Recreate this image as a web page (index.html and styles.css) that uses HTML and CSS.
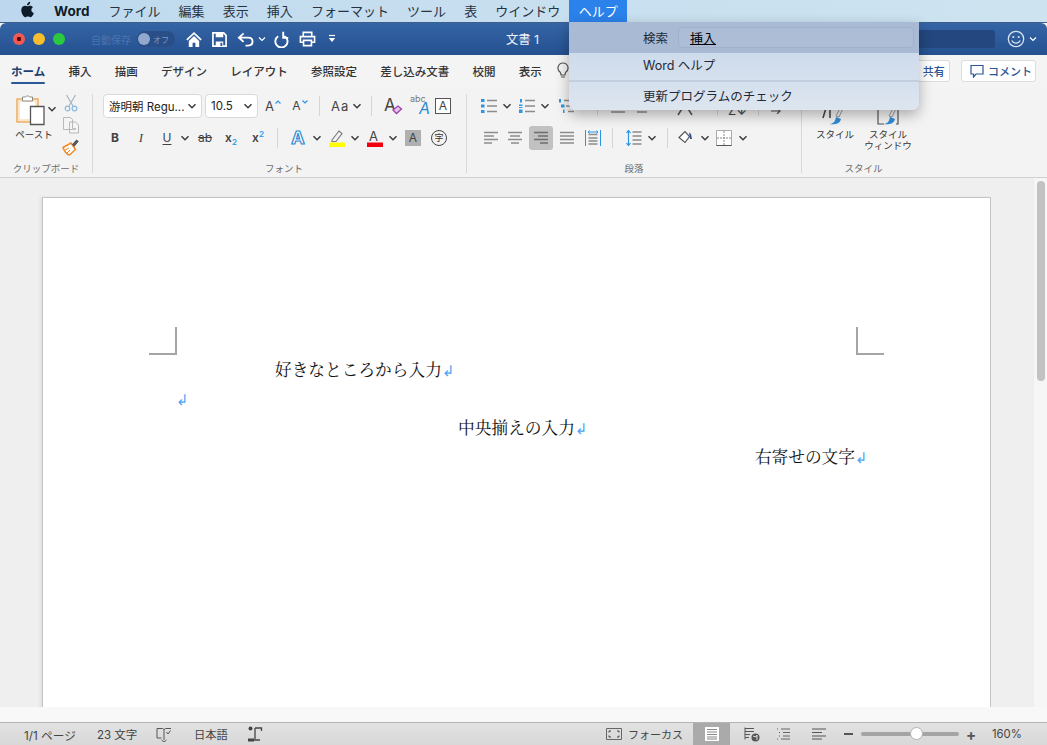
FILE: index.html
```html
<!DOCTYPE html>
<html lang="ja">
<head>
<meta charset="utf-8">
<title>Word</title>
<link rel="stylesheet" href="styles.css">
</head>
<body>
<svg class="defs" width="0" height="0">
  <symbol id="chev" viewBox="0 0 10 10"><path d="M1.500 3.200 5 6.700l3.500-3.500" fill="none" stroke="#3c3c3c" stroke-width="1.500"/></symbol>
  <symbol id="al" viewBox="0 0 16 14"><path d="M1 1.500h14M1 5h10M1 8.500h14M1 12h8" stroke="#8c8c8c" stroke-width="1.500"/></symbol>
  <symbol id="ac" viewBox="0 0 16 14"><path d="M1 1.500h14M3 5h10M1 8.500h14M4 12h8" stroke="#8c8c8c" stroke-width="1.500"/></symbol>
  <symbol id="ar" viewBox="0 0 16 14"><path d="M1 1.500h14M5 5h10M1 8.500h14M7 12h8" stroke="#6e6e6e" stroke-width="1.500"/></symbol>
  <symbol id="aj" viewBox="0 0 16 14"><path d="M1 1.500h14M1 5h14M1 8.500h14M1 12h14" stroke="#8c8c8c" stroke-width="1.500"/></symbol>
</svg>

<nav class="menubar">
  <svg class="apple" viewBox="0 0 14 16"><path d="M10.600 8.400c0-1.700 1.400-2.500 1.500-2.600-.8-1.200-2.100-1.400-2.500-1.400-1.100-.1-2.100.6-2.600.6-.6 0-1.400-.6-2.300-.6C3.500 4.400 2.400 5.100 1.800 6.100.5 8.300 1.500 11.600 2.700 13.400c.6.900 1.300 1.900 2.300 1.800.9 0 1.300-.6 2.400-.6s1.400.6 2.400.6 1.600-.9 2.200-1.800c.7-1 1-2 1-2.100-.1 0-2.400-.9-2.400-2.900zM8.800 3.100c.5-.6.800-1.500.7-2.300-.7 0-1.600.5-2.100 1.100-.5.500-.9 1.400-.8 2.200.8.100 1.700-.4 2.200-1z" fill="#0e1c2a"/></svg>
  <span class="menu-app">Word</span>
  <span>ファイル</span><span>編集</span><span>表示</span><span>挿入</span><span>フォーマット</span><span>ツール</span><span>表</span><span>ウインドウ</span>
  <span class="menu-on">ヘルプ</span>
</nav>

<header class="titlebar">
  <i class="light red"></i><i class="light yellow"></i><i class="light green"></i>
  <span class="autosave">自動保存</span>
  <span class="toggle"><i></i><b>オフ</b></span>
  <svg class="tb home" viewBox="0 0 18 18"><path d="M9 1 .8 8.800l1.300 1.200L9 3.500l6.900 6.500 1.300-1.200z" fill="#fff"/><path d="M3.500 10.500 9 5.300l5.500 5.200V17h-4v-4.500h-3V17h-4z" fill="#fff"/></svg>
  <svg class="tb save" viewBox="0 0 16 16"><path d="M1 1h11.500L15 3.500V15H1z" fill="none" stroke="#fff" stroke-width="1.800"/><path d="M4 1h8v4.500H4zM4 10h8v5H4z" fill="#fff"/><path d="M9 11.500h2V15H9z" fill="#2d5a9b"/></svg>
  <svg class="tb undo" viewBox="0 0 18 16"><path d="M7 1.500 2 6l5 4.500M2.500 6H12c6 0 6 8.500 0 8.500H9" fill="none" stroke="#fff" stroke-width="2"/></svg>
  <svg class="tb-chev" viewBox="0 0 10 10"><path d="M2 3.500 5 6.500l3-3" fill="none" stroke="#fff" stroke-width="1.200"/></svg>
  <svg class="tb redo" viewBox="0 0 16 18"><path d="M4.500 5.500A6.500 6.500 0 1 0 11 5.300" fill="none" stroke="#fff" stroke-width="2"/><path d="M9.800.8v6.400h5.400" fill="none" stroke="#fff" stroke-width="2"/></svg>
  <svg class="tb print" viewBox="0 0 18 16"><path d="M4.500 5V1h9v4M4.500 11.500H1.500V5.500h15v6h-3" fill="none" stroke="#fff" stroke-width="1.700"/><path d="M4.800 9.500h8.400v5.500H4.800z" fill="none" stroke="#fff" stroke-width="1.700"/></svg>
  <svg class="tb-more" viewBox="0 0 8 10"><path d="M1 1.500h6" stroke="#fff" stroke-width="1.200"/><path d="M.8 4h6.400L4 8z" fill="#fff"/></svg>
  <span class="doc-title">文書 1</span>
  <span class="titlesearch"></span>
  <svg class="smile" viewBox="0 0 18 18"><circle cx="9" cy="9" r="7.700" fill="none" stroke="#d6e2f2" stroke-width="1.300"/><circle cx="6.300" cy="7" r="1.100" fill="#d6e2f2"/><circle cx="11.700" cy="7" r="1.100" fill="#d6e2f2"/><path d="M4.800 10.500c1.800 3.500 6.600 3.500 8.400 0" fill="none" stroke="#d6e2f2" stroke-width="1.300"/></svg>
  <svg class="tb-chev" viewBox="0 0 10 10"><path d="M2 3.500 5 6.500l3-3" fill="none" stroke="#fff" stroke-width="1.200"/></svg>
</header>

<div class="tabs">
  <span class="tab-on">ホーム</span><span>挿入</span><span>描画</span><span>デザイン</span><span>レイアウト</span><span>参照設定</span><span>差し込み文書</span><span>校閲</span><span>表示</span>
  <svg class="bulb" viewBox="0 0 12 18"><path d="M6 1a5 5 0 0 0-3 9c.7.6 1 1.500 1 3h4c0-1.500.3-2.400 1-3A5 5 0 0 0 6 1zM4 15h4" fill="none" stroke="#555" stroke-width="1.200"/></svg>
  <span class="share">共有</span>
  <span class="comment"><svg viewBox="0 0 14 14"><path d="M1 1.500h12v8.500H6l-2.500 3v-3H1z" fill="none" stroke="#2b5797" stroke-width="1.200"/></svg>コメント</span>
</div>

<section class="ribbon">
  <div class="group clip">
    <div class="body clip-body">
      <div class="paste">
        <div class="paste-top">
          <svg class="paste-ic" viewBox="0 0 32 32"><path d="M2 4h21v23H2z" fill="#fbe8cc" stroke="#efaf62" stroke-width="1.500"/><path d="M5 7h15v17H5z" fill="#fff"/><path d="M7.500 4V2h3c.5-1.500 3.500-1.500 4 0h3v4h-10z" fill="#fff" stroke="#8c8c8c"/><path d="M15.500 11.500h13.500v18H15.500z" fill="#fff" stroke="#555" stroke-width="1.300"/></svg>
          <svg class="chev"><use href="#chev"/></svg>
        </div>
        <span class="small">ペースト</span>
      </div>
      <div class="clip-tools">
        <svg viewBox="0 0 16 18"><path d="M3.500 1 10 12M12.500 1 6 12" stroke="#a9b4bd" stroke-width="1.200" fill="none"/><circle cx="4.500" cy="14.500" r="2.300" fill="none" stroke="#8db9dc" stroke-width="1.200"/><circle cx="11.500" cy="14.500" r="2.300" fill="none" stroke="#8db9dc" stroke-width="1.200"/></svg>
        <svg viewBox="0 0 18 18"><path d="M1.500 1.500h7l2 2v10h-9zM7.500 6h6l3 3v8h-9z" fill="#f4f4f4" stroke="#b8b8b8"/><path d="M10 12h4v2h-4z" fill="#c4c4c4"/></svg>
        <svg viewBox="0 0 18 18"><path d="M1 9.500 9 5l4.500 6.500-6 5.500c-2.500-.5-5-3.500-6.500-7.500z" fill="#fff" stroke="#ee8a26" stroke-width="1.500"/><path d="M3 12l4-2M5 15l3-3" stroke="#ee8a26"/><path d="M10 6.500 14.500 1.500l2.300 1.800-4.500 5.500z" fill="#555"/></svg>
      </div>
    </div>
    <div class="label">クリップボード</div>
  </div>

  <div class="group font">
    <div class="body">
      <div class="row first">
        <span class="select sel-font">游明朝 Regu...<svg class="chev"><use href="#chev"/></svg></span>
        <span class="select sel-size">10.5<svg class="chev"><use href="#chev"/></svg></span>
        <span class="ib grow">A<svg class="caret" viewBox="0 0 6 4"><path d="M.5 3.500 3 1l2.500 2.500" fill="none" stroke="#2a96e6" stroke-width="1.200"/></svg></span>
        <span class="ib shrink">A<svg class="caret" viewBox="0 0 6 4"><path d="M.5.500 3 3 5.500.5" fill="none" stroke="#2a96e6" stroke-width="1.200"/></svg></span>
        <i class="sep s-a"></i>
        <span class="case">Aa</span><svg class="chev"><use href="#chev"/></svg>
        <i class="sep s-b"></i>
        <svg class="ic24" viewBox="0 0 24 24"><text x="3" y="17" class="svg-a">A</text><path d="M12 16l5-4 3.500 3-5 4.500z" fill="#e4c6ea" stroke="#a040b0" stroke-width="1.300"/></svg>
        <svg class="ic24 m-d" viewBox="0 0 24 24"><text x="3" y="8" class="svg-abc">abc</text><text x="12" y="20" class="svg-ab">A</text></svg>
        <span class="boxa">A</span>
      </div>
      <div class="row">
        <span class="ib26 bold">B</span>
        <span class="ib26 ital">I</span>
        <span class="ib26 under">U</span>
        <svg class="chev"><use href="#chev"/></svg>
        <span class="ib strike">ab</span>
        <span class="ib script">x<sub>2</sub></span>
        <span class="ib script sup-x">x<sup>2</sup></span>
        <i class="sep s-c"></i>
        <span class="ib fx">A</span><svg class="chev fx-chev"><use href="#chev"/></svg>
        <svg class="m-e" viewBox="0 0 18 18"><path d="M4 11 11 2l3 2.500-6 8H4z" fill="none" stroke="#777" stroke-width="1.100"/><path d="M1 13.500h16V18H1z" fill="#ff0"/></svg><svg class="chev"><use href="#chev"/></svg>
        <svg class="m-e" viewBox="0 0 18 18"><text x="3" y="12" class="svg-a2">A</text><path d="M1 13.500h16V18H1z" fill="#f0000f"/></svg><svg class="chev"><use href="#chev"/></svg>
        <span class="shade">A</span>
        <span class="zi">字</span>
      </div>
    </div>
    <div class="label">フォント</div>
  </div>

  <div class="group para">
    <div class="body">
      <div class="row first">
        <svg class="ic16 m-f" viewBox="0 0 16 14"><path d="M6 1.500h10M6 7h10M6 12.500h10" stroke="#8c8c8c" stroke-width="1.500"/><path d="M0 0h3.500v3H0zM0 5.500h3.500v3H0zM0 11h3.500v3H0z" fill="#2a96e6"/></svg>
        <svg class="chev"><use href="#chev"/></svg>
        <svg class="ic16 m-g" viewBox="0 0 16 14"><path d="M6 1.500h10M6 7h10M6 12.500h10" stroke="#8c8c8c" stroke-width="1.500"/><path d="M1 0h2v3.500H1zM0 5.500h3.500V7H0zM0 8h3.500v1H0zM0 10.500h3.500V14H0z" fill="#2a96e6"/></svg>
        <svg class="chev"><use href="#chev"/></svg>
        <svg class="ic16 m-g2" viewBox="0 0 16 14"><path d="M6 1.500h10M8 7h8M10 12.500h6" stroke="#8c8c8c" stroke-width="1.500"/><path d="M1 0h2v3.500H1zM3 5.500h3.500v3H3zM5 10.500h1.500V14H5z" fill="#2a96e6"/></svg>
        <i class="sep s-d"></i>
        <svg class="ic24 m-h" viewBox="0 0 36 24"><path d="M0 18h14M26 18h14" stroke="#8c8c8c" stroke-width="1.500"/></svg>
        <svg class="ic24 m-i" viewBox="0 0 24 24"><path d="M5 21 12 10l7 11" fill="none" stroke="#555" stroke-width="1.500"/></svg>
        <i class="sep s-e"></i>
        <svg class="ic24 m-j" viewBox="0 0 24 24"><text x="2" y="21" class="svg-a2">Z↓</text></svg>
        <i class="sep s-f"></i>
        <svg class="ic16 m-k" viewBox="0 0 16 16"><path d="M3 13h9M9 10l3 3-3 3" fill="none" stroke="#555" stroke-width="1.200"/></svg>
      </div>
      <div class="row">
        <svg class="ic16 m-l"><use href="#al"/></svg>
        <svg class="ic16 m-m"><use href="#ac"/></svg>
        <span class="active"><svg class="ic16"><use href="#ar"/></svg></span>
        <svg class="ic16 m-n"><use href="#aj"/></svg>
        <svg class="ic16 m-o" viewBox="0 0 16 16"><path d="M3.500 4.500h9M3.500 8h9M3.500 11h9M3.500 14h9" stroke="#8c8c8c" stroke-width="1.300"/><path d="M.5 0v16M15.500 0v16M3 2h10M3 2l1.500-1.500M3 2l1.500 1.500M13 2l-1.500-1.500M13 2l-1.500 1.500" stroke="#2a96e6" fill="none" stroke-width="1"/></svg>
        <i class="sep s-g"></i>
        <svg class="ic16 m-p" viewBox="0 0 16 16"><path d="M6.500 2h9M6.500 6h9M6.500 10h9M6.500 14h9" stroke="#8c8c8c" stroke-width="1.500"/><path d="M2.500 1v14M.5 3l2-2.500L4.500 3M.5 13l2 2.500 2-2.500" stroke="#2a96e6" fill="none" stroke-width="1.200"/></svg>
        <svg class="chev"><use href="#chev"/></svg>
        <i class="sep s-h"></i>
        <svg class="ic16 m-q" viewBox="0 0 16 16"><path d="M1 7.500 7 1.500l4.500 5L7 12.500z" fill="#fff" stroke="#555" stroke-width="1.200"/><path d="M11 2.500l2 1.500 1 5h-2z" fill="#2b5797"/></svg>
        <svg class="chev m-r"><use href="#chev"/></svg>
        <svg class="ic16 m-s" viewBox="0 0 16 16"><path d="M.5.500h15v15H.5z" fill="#fff" stroke="#aaa"/><path d="M8 1v14M1 8h14" stroke="#888" stroke-dasharray="2 1"/><path d="M.5 15.500h15" stroke="#555"/></svg>
        <svg class="chev m-r"><use href="#chev"/></svg>
      </div>
    </div>
    <div class="label">段落</div>
  </div>

  <div class="group styles">
    <div class="body style-body">
      <div class="style-item s-one">
        <svg viewBox="0 0 34 34"><path d="M4 24 9 7h7M11 7v17" fill="none" stroke="#444" stroke-width="1.500"/><path d="M17 22l8-15 2 1-7 15z" fill="none" stroke="#999"/><path d="M10 30c3 0 6-1 7-7l5 2c-1 5-7 6-12 5z" fill="#2f8bd6"/></svg>
        <span class="small">スタイル</span>
      </div>
      <div class="style-item s-two">
        <svg viewBox="0 0 34 34"><path d="M6 14v16h6M26 14v16h-2M6 14h4" fill="none" stroke="#555" stroke-width="1.200"/><path d="M17 22l8-15 2 1-7 15z" fill="none" stroke="#999"/><path d="M11 30c3 0 6-1 7-7l5 2c-1 5-7 6-12 5z" fill="#2f8bd6"/></svg>
        <span class="small">スタイル<br>ウィンドウ</span>
      </div>
    </div>
    <div class="label">スタイル</div>
  </div>
</section>

<main class="workspace">
  <div class="canvas">
    <article class="page">
      <div class="crops"><i class="crop crop-l"></i><i class="crop crop-r"></i></div>
      <p class="line indent">好きなところから入力<span class="mark">↲</span></p>
      <p class="line"><span class="mark">↲</span></p>
      <p class="line center">中央揃えの入力<span class="mark">↲</span></p>
      <p class="line right">右寄せの文字<span class="mark">↲</span></p>
    </article>
    <div class="scrollbar"><i></i></div>
  </div>
  <div class="below"></div>
</main>

<footer class="status">
  <span class="st-a">1/1 ページ</span>
  <span class="st-b">23 文字</span>
  <svg class="st-book" viewBox="0 0 16 15"><path d="M1 1.500h5.500l1.500 1 1.500-1H15M8 2.500V13M1 1.500V11h4.500M5.500 13 8 15l2.500-2" fill="none" stroke="#555"/><path d="M10.500 5l1.500 2 2.500-3.500" fill="none" stroke="#555"/></svg>
  <span class="st-c">日本語</span>
  <svg class="st-track" viewBox="0 0 16 16"><circle cx="3.500" cy="2.500" r="2" fill="#444"/><path d="M8 2h6.500v3M8 2v11M3 14h10" fill="none" stroke="#444" stroke-width="1.300"/><path d="M1 12.500h6v3H1z" fill="#444"/></svg>
  <svg class="st-focus" viewBox="0 0 16 12"><path d="M.5.500h15v11H.5z" fill="none" stroke="#666"/><path d="M3 4.500V3h2M13 4.500V3h-2M3 7.500V9h2M13 7.500V9h-2" fill="none" stroke="#444"/></svg>
  <span class="st-d">フォーカス</span>
  <span class="view-on"><svg viewBox="0 0 14 14"><path d="M0 0h14v14H0z" fill="#fff"/><path d="M2 2.500h10M2 5h10M2 7.500h10M2 10h10M2 12h10" stroke="#888"/></svg></span>
  <svg class="st-web" viewBox="0 0 16 15"><path d="M1 1.500h9M1 4.500h9M1 7.500h5M1 10.500h4" stroke="#555"/><path d="M1 .5v12" stroke="#555"/><circle cx="11.500" cy="10.500" r="4" fill="#555"/><path d="M9 9l3 1 1-2v5" stroke="#ddd" fill="none"/></svg>
  <svg class="st-out" viewBox="0 0 14 12"><path d="M4 1h9M6 4.500h7M6 8h7M4 11h9" stroke="#666"/><path d="M0 1h2M2 4.500h2M2 8h2M0 11h2" stroke="#666" stroke-dasharray="1 1"/></svg>
  <svg class="st-draft" viewBox="0 0 14 12"><path d="M0 1h14M0 4.500h10M0 8h14M0 11h10" stroke="#555"/></svg>
  <i class="zoom-minus"></i>
  <span class="slider"><i></i></span>
  <span class="zoom-plus">+</span>
  <span class="st-e">160%</span>
</footer>

<div class="dropdown">
  <div class="dd-search"><span>検索</span><span class="dd-input"><u>挿入</u></span></div>
  <div class="dd-item">Word ヘルプ</div>
  <i class="dd-sep"></i>
  <div class="dd-item dd-last">更新プログラムのチェック</div>
</div>
</body>
</html>
```

FILE: styles.css
```css
* { box-sizing: border-box; }
html, body { margin: 0; height: 100%; }
body {
  width: 1047px; height: 745px; overflow: hidden; position: relative;
  display: flex; flex-direction: column;
  font-family: Inter, "Noto Sans CJK JP", sans-serif;
  color: #333; background: #f3f3f3;
}
i { display: block; font-style: normal; }
svg { display: block; flex: none; }
.defs { position: absolute; }

/* menu bar */
.menubar {
  height: 23px; flex: none; display: flex; align-items: center; gap: 18.100px;
  background: linear-gradient(90deg, #bdd8ee 0, #c6deef 40%, #cde3f0 100%);
  font-size: 13px; color: #27333f; padding-left: 20px; padding-bottom: 1px;
  border-bottom: 1px solid #3c5f88; white-space: nowrap;
}
.apple { width: 15px; height: 17px; margin-bottom: 2px; margin-right: 1px; }
.menu-app { font-weight: 700; font-size: 13.500px; color: #0e1c2a; margin-right: 1px; }
.menu-on {
  background: #2b82ea; color: #fff; height: 22px; line-height: 22px;
  padding: 0 9px 0 10px; margin-left: -9.500px; width: 58px; align-self: flex-start;
}

/* title bar */
.titlebar {
  height: 32px; flex: none; display: flex; align-items: center; padding-left: 13px;
  background: linear-gradient(#3565a6, #24508f);
  border-radius: 6px 6px 0 0; position: relative;
}
.light { width: 12px; height: 12px; border-radius: 50%; margin-right: 8px; }
.red { background: radial-gradient(circle, #5a0a0a 0 2px, #f05a52 2.500px); }
.yellow { background: #f9bd2e; }
.green { background: #2ac940; }
.autosave { font-size: 10px; color: #4c74ad; margin-left: 18px; width: 39px; white-space: nowrap; }
.toggle {
  margin-left: 7px; width: 38px; height: 16px; border-radius: 8px; background: #2a4f88;
  display: flex; align-items: center; font-size: 8px; color: #7f9cc4; gap: 3px;
}
.toggle i { width: 12px; height: 12px; border-radius: 50%; background: #92a8cc; margin-left: 1px; }
.toggle b { font-weight: 400; }
.tb { height: 17px; }
.home { width: 18px; margin-left: 10px; }
.save { width: 15px; height: 15px; margin-left: 9px; }
.undo { width: 17px; height: 15px; margin-left: 10px; }
.tb-chev { width: 10px; height: 10px; margin-left: 3px; }
.redo { width: 15px; margin-left: 7px; }
.print { width: 17px; height: 16px; margin-left: 10px; }
.tb-more { width: 8px; height: 10px; margin-left: 12px; }
.doc-title { color: #eef3fa; font-size: 12.300px; margin-left: 170px; white-space: nowrap; }
.titlesearch { margin-left: auto; width: 200px; height: 18px; background: #24477f; border-radius: 3px; }
.smile { width: 18px; height: 18px; margin-left: 12px; }
.titlebar .tb-chev:last-child { margin-left: 3px; margin-right: 9px; }

/* tabs */
.tabs {
  height: 32px; flex: none; display: flex; align-items: center; gap: 23.250px; padding: 0 11px;
  font-size: 11.500px; font-weight: 500; color: #333; background: #f4f4f4;
}
.tab-on { color: #1d3f73; font-weight: 700; position: relative; }
.tab-on::after {
  content: ""; position: absolute; left: 0; right: 0; bottom: -5px; height: 2px;
  background: #2b5797; border-radius: 1px;
}
.bulb { width: 12px; height: 18px; margin-left: -8px; }
.share, .comment {
  height: 22px; display: flex; align-items: center; background: #fff; border: 1px solid #dcdcdc;
  border-radius: 3px; color: #2b5797; font-size: 11px; font-weight: 500;
}
.share { margin-left: auto; padding: 0 4px 0 30px; }
.comment { margin-left: -12px; width: 75px; padding: 0 0 0 8px; gap: 4px; white-space: nowrap; }
.comment svg { width: 14px; height: 14px; }

/* ribbon */
.ribbon {
  height: 91px; flex: none; display: flex; padding: 7px 0 4px; background: #f3f3f3;
  border-bottom: 1px solid #cfcfcf;
}
.group { display: flex; flex-direction: column; border-right: 1px solid #d8d8d8; }
.group:last-child { border-right: 0; }
.clip { width: 93px; }
.font { width: 374px; padding-left: 9px; }
.para { width: 335px; }
.styles { width: 123px; }
.body { flex: 1; }
.label { height: 13px; line-height: 13px; text-align: center; font-size: 9.500px; color: #6b6b6b; margin-bottom: -2px; white-space: nowrap; }
.row { height: 24px; display: flex; align-items: center; }
.row.first { margin-bottom: 8px; }
.font .row.first { padding-left: 1px; }
.chev { width: 10px; height: 10px; }
.small { font-size: 9.500px; line-height: 11px; color: #333; text-align: center; }

/* clipboard */
.clip-body { display: flex; padding-left: 15px; }
.paste { width: 42px; }
.paste-top { display: flex; align-items: center; height: 36px; margin-top: -1px; }
.paste-ic { width: 32px; height: 32px; }
.paste-top .chev { margin-top: -4px; }
.paste .small { display: block; width: 38px; white-space: nowrap; }
.clip-tools { display: flex; flex-direction: column; align-items: center; gap: 4px; margin-left: 4px; width: 20px; }
.clip-tools svg { width: 18px; height: 18px; }

/* font */
.select {
  height: 24px; background: #fff; border: 1px solid #dadada; border-radius: 4px;
  display: flex; align-items: center; justify-content: space-between;
  font-size: 11.500px; color: #222; padding: 0 4px 0 5px; white-space: nowrap;
}
.sel-font { width: 99px; }
.sel-size { width: 53px; margin-left: 3px; }
.ib, .ib26 { display: block; text-align: center; color: #444; font-size: 13px; line-height: 24px; }
.ib26 { width: 26px; }
.grow, .shrink { display: flex; align-items: center; justify-content: center; gap: 1px; margin-left: 1px; }
.grow { width: 28px; }
.shrink { width: 24px; font-size: 12px; }
.caret { width: 6px; height: 4px; margin-bottom: 9px; }
sup, sub { font-size: 8px; line-height: 0; color: #2a96e6; }
.sep { width: 1px; height: 20px; background: #d6d6d6; flex: none; }
.s-a { margin: 0 11px 0 7px; }
.case { font-size: 13px; letter-spacing: 1px; color: #444; width: 21px; }
.s-b { margin: 0 9px; }
.ic24 { width: 24px; height: 24px; }
.m-d { margin-left: 2px; }
.svg-a { font: 17px Inter, sans-serif; fill: #444; }
.svg-a2 { font: 13px Inter, sans-serif; fill: #444; }
.svg-abc { font: 9px Inter, sans-serif; fill: #777; }
.svg-ab { font: italic 16px Inter, sans-serif; fill: #2a8ad2; }
.boxa {
  width: 16px; height: 16px; border: 1.500px solid #555; background: #fff; font-size: 12px;
  text-align: center; line-height: 13px; margin-left: 4px; color: #444;
}
.bold { font-weight: 700; font-size: 12px; }
.ital { font-style: italic; font-family: "Liberation Serif", serif; font-size: 13px; }
.under { text-decoration: underline; text-underline-offset: 2px; font-size: 12px; }
.strike { width: 30px; text-decoration: line-through; font-size: 12px; }
.script { width: 22px; font-weight: 600; font-size: 12px; }
.sup-x { margin-left: 5px; }
.s-c { margin: 0 9px 0 8px; }
.fx { width: 22px; font-size: 18px; font-weight: 700; color: #fff; -webkit-text-stroke: 1.200px #2a8ad2; line-height: 24px; }
.fx-chev { margin-left: 3px; }
.m-e { width: 18px; height: 18px; margin-left: 6px; }
.m-e + .chev { margin-left: 4px; }
.shade { width: 16px; height: 16px; background: #b0b0b0; font-size: 12px; line-height: 16px; text-align: center; margin-left: 7px; color: #444; }
.zi {
  width: 16px; height: 16px; border: 1px solid #444; border-radius: 50%; font-size: 9px;
  line-height: 14px; text-align: center; margin-left: 10px; color: #333;
}

/* paragraph */
.ic16 { width: 16px; height: 14px; }
.m-f { margin-left: 14px; }
.m-g { margin-left: 7px; }
.m-g2 { margin-left: 8px; }
.para .chev { margin-left: 5px; }
.s-d { margin-left: 23px; }
.m-h { width: 36px; margin-left: 13px; }
.m-i { margin-left: 26px; }
.s-e { margin-left: 20px; }
.m-j { margin-left: 8px; }
.s-f { margin-left: 8px; }
.m-k { margin-left: 9px; height: 16px; }
.m-l { margin-left: 16px; }
.m-m { margin-left: 8px; }
.active {
  width: 24px; height: 24px; margin-left: 6px; background: #c1c1c1; border-radius: 3px;
  display: flex; align-items: center; justify-content: center; flex: none;
}
.m-n { margin-left: 6px; }
.m-o { margin-left: 10px; height: 16px; }
.s-g { margin-left: 11px; }
.m-p { margin-left: 13px; height: 16px; }
.s-h { margin-left: 10px; }
.m-q { margin-left: 10px; height: 16px; }
.para .m-r { margin-left: 6px; }
.m-s { margin-left: 6px; height: 16px; }

/* styles */
.style-body { display: flex; padding-left: 12px; }
.style-item { width: 44px; display: flex; flex-direction: column; align-items: center; }
.style-item svg { width: 34px; height: 34px; margin-bottom: 1px; }
.style-item .small { white-space: nowrap; margin-left: -2px; }
.s-two { margin-left: 9px; }

/* document */
.workspace { flex: 1; min-height: 0; display: flex; flex-direction: column; background: #f7f7f7; }
.canvas { height: 529px; flex: none; display: flex; background: #efefef; padding-left: 42px; overflow: hidden; }
.page {
  width: 949px; height: 600px; margin-top: 19px; background: #fff; border: 1px solid #c4c4c4;
  padding: 129px 135px 0 133px; box-shadow: -2px 0 3px rgba(0,0,0,.06); flex: none;
}
.crops { display: flex; justify-content: space-between; margin: 0 -29px 0 -27px; }
.crop { width: 28px; height: 28px; border: 0 solid #a5a5a5; border-bottom-width: 2px; }
.crop-l { border-right-width: 2px; }
.crop-r { border-left-width: 2px; }
.line {
  margin: 0; height: 29px; line-height: 29px; font-size: 16.700px; color: #111;
  font-family: "Noto Serif CJK JP", "Liberation Serif", "Noto Sans CJK JP", serif;
  white-space: nowrap;
}
.indent { padding-left: 99px; }
.center { text-align: center; padding-left: 2px; }
.right { text-align: right; }
.mark {
  display: inline-block; width: 0; color: #4aa5f5; font-size: 15px;
  font-family: "DejaVu Sans", sans-serif; line-height: 1; overflow: visible;
}
.scrollbar { width: 14px; margin-left: 42px; background: #f6f6f6; padding: 3px; flex: none; border-left: 1px solid #ededed; }
.scrollbar i { width: 8px; height: 200px; background: #c2c2c2; border-radius: 4px; }
.below { flex: 1; background: #f8f8f8; }

/* status */
.status {
  height: 23px; flex: none; display: flex; align-items: center; font-size: 11.300px; color: #444;
  background: linear-gradient(#e2e2e2, #d8d8d8); border-top: 1px solid #b4b4b4; padding-left: 24px;
}
.st-a { width: 73px; white-space: nowrap; font-size: 11.700px; }
.st-b { width: 59px; white-space: nowrap; font-size: 11.500px; }
.st-book { width: 16px; height: 15px; }
.st-c { margin-left: 22px; width: 53px; white-space: nowrap; }
.st-track { width: 16px; height: 16px; }
.st-focus { width: 16px; height: 12px; margin-left: 343px; }
.st-d { width: 56px; margin-left: 6px; white-space: nowrap; font-size: 11px; }
.view-on { width: 37px; height: 22px; margin-left: 9px; background: #aaa; display: flex; align-items: center; justify-content: center; }
.view-on svg { width: 14px; height: 14px; }
.st-web { width: 16px; height: 15px; margin-left: 14px; }
.st-out { width: 14px; height: 12px; margin-left: 17px; }
.st-draft { width: 14px; height: 12px; margin-left: 21px; }
.zoom-minus { width: 9px; height: 2px; background: #555; margin-left: 18px; }
.slider { width: 98px; height: 4px; background: #a4a4a4; border-radius: 2px; margin-left: 8px; position: relative; }
.slider i {
  position: absolute; left: 49px; top: -5px; width: 13px; height: 13px; border-radius: 50%;
  background: #fff; border: 1px solid #b4b4b4;
}
.zoom-plus { margin-left: 7px; width: 10px; text-align: center; font-size: 15px; font-weight: 700; line-height: 1; color: #555; }
.st-e { margin-left: 16px; white-space: nowrap; }

/* dropdown over the window */
.dropdown {
  position: absolute; left: 569px; top: 22px; width: 350px; height: 88px;
  background: linear-gradient(#c6d6ea, #dde5ef);
  border-radius: 0 0 7px 7px; box-shadow: 0 5px 14px rgba(0,0,0,.3);
  font-size: 12.500px; color: #1e2a38; overflow: hidden;
}
.dd-search {
  height: 31px; background: #a9bad4; display: flex; align-items: center; padding: 0 5px 0 74px;
}
.dd-input {
  margin-left: 10px; flex: 1; height: 21px; border: 1px solid #a0b1cc; border-radius: 4px;
  background: #adbdd6; padding-left: 11px; line-height: 20px; color: #000; font-size: 13px;
}
.dd-item { padding-left: 74px; height: 27px; line-height: 26px; }
.dd-sep { height: 2px; background: #c2cedd; }
.dd-last { line-height: 29px; }
```
